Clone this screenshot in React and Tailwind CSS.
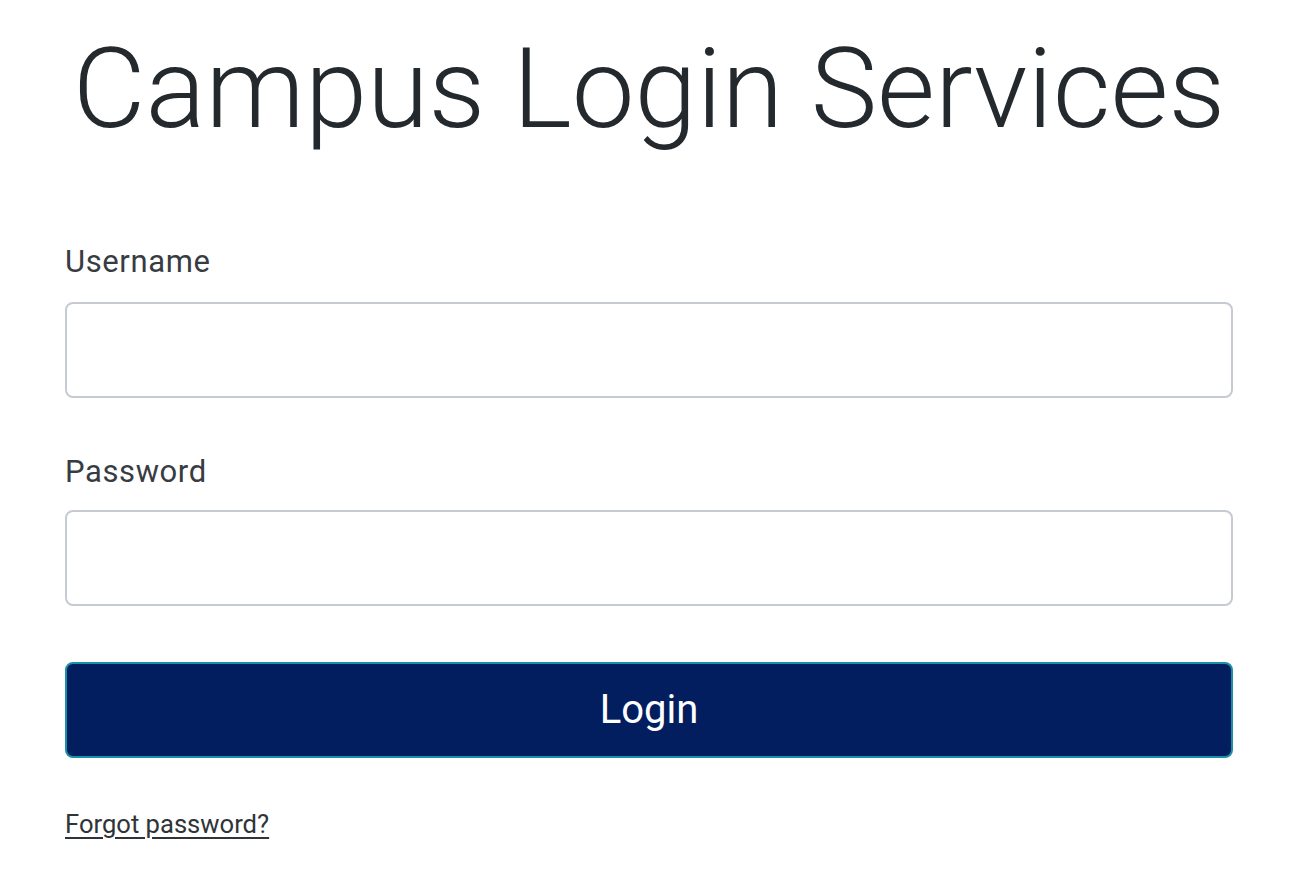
export default function App() {
  return (
    <div className="w-[1293px] h-[879px] bg-white pl-[65px] pr-[60px]" style={{ fontFamily: "Roboto, 'Noto Sans', sans-serif" }}>
      <h1 className="text-center font-light text-[#24292e] text-[112px] leading-none pt-[33px] whitespace-nowrap">Campus Login Services</h1>
      <div className="mt-[101px] flex flex-col">
        <label className="text-[31px] leading-none tracking-[0.6px] text-[#373c43]">Username</label>
        <input type="text" className="mt-[25px] h-[96px] w-full rounded-[8px] border-2 border-[#c6cad2] bg-white outline-none" />
        <label className="mt-[58px] text-[31px] leading-none tracking-[0.6px] text-[#373c43]">Password</label>
        <input type="password" className="mt-[23px] h-[96px] w-full rounded-[8px] border-2 border-[#c6cad2] bg-white outline-none" />
        <button className="mt-[56px] h-[96px] w-full rounded-[8px] border-2 border-[#1a8fa8] bg-[#021e5f] text-white text-[40px] leading-none">Login</button>
        <a href="#" className="mt-[54px] self-start text-[25.6px] leading-none text-[#2f3438] underline underline-offset-[4px]">Forgot password?</a>
      </div>
    </div>
  );
}
